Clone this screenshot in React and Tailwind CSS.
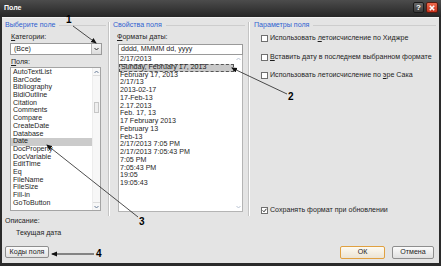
import React from "react";

const fields = [
  "AutoTextList",
  "BarCode",
  "Bibliography",
  "BidiOutline",
  "Citation",
  "Comments",
  "Compare",
  "CreateDate",
  "Database",
  "Date",
  "DocProperty",
  "DocVariable",
  "EditTime",
  "Eq",
  "FileName",
  "FileSize",
  "Fill-in",
  "GoToButton",
];

const formats = [
  "2/17/2013",
  "Sunday, February 17, 2013",
  "February 17, 2013",
  "2/17/13",
  "2013-02-17",
  "17-Feb-13",
  "2.17.2013",
  "Feb. 17, 13",
  "17 February 2013",
  "February 13",
  "Feb-13",
  "2/17/2013 7:05 PM",
  "2/17/2013 7:05:43 PM",
  "7:05 PM",
  "7:05:43 PM",
  "19:05",
  "19:05:43",
];

function GroupTitle({ children }) {
  return (
    <div className="flex items-center gap-[4px] h-[9px] leading-[9px] text-[#2f5fd0]">
      <span className="whitespace-nowrap">{children}</span>
      <div className="flex-1 h-px bg-[#cdcdcd]" />
    </div>
  );
}

function Chevron({ up, color = "#6b7f99" }) {
  return (
    <svg width="5" height="4" viewBox="0 0 5 4">
      <path
        d={up ? "M0.5 3 L2.5 1 L4.5 3" : "M0.5 1 L2.5 3 L4.5 1"}
        fill="none"
        stroke={color}
        strokeWidth="1"
      />
    </svg>
  );
}

function Check({ checked }) {
  return (
    <span className="w-[7px] h-[7px] border border-[#6f6f6f] bg-white flex items-center justify-center shrink-0">
      {checked && (
        <svg width="5" height="5" viewBox="0 0 5 5">
          <path d="M0.6 2.4 L2 3.8 L4.4 0.8" fill="none" stroke="#333" strokeWidth="1" />
        </svg>
      )}
    </span>
  );
}

function CheckRow({ checked, children }) {
  return (
    <div className="flex items-center gap-[2px] h-[9px] ml-[7px]">
      <Check checked={checked} />
      <span className="whitespace-nowrap">{children}</span>
    </div>
  );
}

function Separator() {
  return <div className="w-[2px] h-[194px] mt-[4px] border-l border-[#c4c4c4] border-r border-r-white shrink-0" />;
}

export default function App() {
  return (
    <div
      className="w-[441px] h-[266px] bg-[#2b2b2b] relative overflow-hidden text-[7.1px] text-[#1e1e1e]"
      style={{ fontFamily: '"Liberation Sans", Arial, sans-serif' }}
    >
      {/* title bar */}
      <div className="h-[17px] flex items-center justify-between pl-[4px] pr-[3px] bg-gradient-to-b from-[#4c4c4c] to-[#262626]">
        <span className="text-white font-bold text-[7px]">Поле</span>
        <div className="flex gap-[2px] mt-[-2px]">
          <div className="w-[11px] h-[11px] rounded-[2px] border border-[#1a1a1a] bg-gradient-to-b from-[#6a6a6a] to-[#3a3a3a] text-white font-bold text-[8px] leading-[10px] text-center">
            ?
          </div>
          <div className="w-[12px] h-[11px] rounded-[2px] border border-[#5a1b10] bg-gradient-to-b from-[#ef6a4c] to-[#c8301b] flex items-center justify-center">
            <svg width="6" height="6" viewBox="0 0 6 6">
              <path d="M0.8 0.8 L5.2 5.2 M5.2 0.8 L0.8 5.2" stroke="white" strokeWidth="1.6" />
            </svg>
          </div>
        </div>
      </div>

      {/* body */}
      <div className="mx-[2px] h-[246px] bg-[#e4e4e4] flex border-t border-[#f2f2f2]">
        {/* left column */}
        <div className="w-[106px] pl-[3px] pr-[2px] pt-[3px] flex flex-col shrink-0">
          <GroupTitle>Выберите поле</GroupTitle>
          <div className="mt-[3px] h-[9px] leading-[9px] ml-[6px]">
            <u>К</u>атегории:
          </div>
          <div className="mt-[1px] ml-[5px] w-[92px] h-[12px] border border-[#9a9a9a] bg-white flex items-center">
            <span className="flex-1 pl-[3px]">(Все)</span>
            <div className="w-[10px] h-full border-l border-[#b8b8b8] bg-gradient-to-b from-[#f4f4f4] to-[#dcdcdc] flex items-center justify-center">
              <Chevron color="#333" />
            </div>
          </div>
          <div className="mt-[3px] h-[9px] leading-[9px] ml-[6px]">
            <u>П</u>оля:
          </div>
          <div className="ml-[5px] w-[91px] h-[144px] border border-[#a4a4a4] bg-white flex">
            <div className="flex-1 pt-[1px] leading-[7.7px]">
              {fields.map((f) => (
                <div
                  key={f}
                  className={`pl-[2px] h-[7.7px] whitespace-nowrap ${f === "Date" ? "bg-[#cbcbcb]" : ""}`}
                >
                  {f}
                </div>
              ))}
            </div>
            <div className="w-[8px] flex flex-col items-center bg-[#f7f7f7] border-l border-[#ededed]">
              <div className="h-[8px] w-full flex items-center justify-center border-b border-[#dcdcdc]">
                <Chevron up />
              </div>
              <div className="flex-1 w-full pt-[26px] flex justify-center">
                <div className="w-[5px] h-[11px] border border-[#c6c6c6] bg-[#eeeeee]" />
              </div>
              <div className="h-[8px] w-full flex items-center justify-center border-t border-[#dcdcdc]">
                <Chevron />
              </div>
            </div>
          </div>
          <div className="mt-[6px] h-[9px] leading-[9px]">Описание:</div>
          <div className="mt-[3px] h-[9px] leading-[9px] ml-[11px]">Текущая дата</div>
          <div className="mt-[8px] w-[44px] h-[12px] border border-[#8e8e8e] rounded-[2px] bg-gradient-to-b from-[#fbfbfb] to-[#e2e2e2] flex items-center justify-center">
            Ко<u>д</u>ы поля
          </div>
        </div>

        <Separator />

        {/* middle column */}
        <div className="w-[138px] pl-[3px] pr-[3px] pt-[3px] flex flex-col shrink-0">
          <GroupTitle>Свойства поля</GroupTitle>
          <div className="mt-[3px] h-[9px] leading-[9px] ml-[4px]">
            <u>Ф</u>орматы даты:
          </div>
          <div className="mt-[2px] ml-[5px] w-[125px] h-[11px] border border-[#9a9a9a] bg-white flex items-center pl-[2px]">
            dddd, MMMM dd, yyyy
          </div>
          <div className="ml-[5px] w-[125px] h-[157px] border border-[#b4b4b4] border-t-0 bg-white flex">
            <div className="flex-1 pt-[1px] leading-[7.75px]">
              {formats.map((f, i) => (
                <div
                  key={f}
                  className={`pl-[1px] h-[7.75px] whitespace-nowrap ${
                    i === 1 ? "bg-[#c9c9c9] border border-dashed border-[#555] leading-[5.75px]" : ""
                  }`}
                >
                  {f}
                </div>
              ))}
            </div>
            <div className="w-[8px] flex flex-col items-center justify-between">
              <div className="h-[8px] flex items-center">
                <Chevron up color="#b9c3d3" />
              </div>
              <div className="h-[8px] flex items-center">
                <Chevron color="#b9c3d3" />
              </div>
            </div>
          </div>
        </div>

        <Separator />

        {/* right column */}
        <div className="flex-1 pl-[4px] pr-[3px] pt-[3px] flex flex-col">
          <GroupTitle>Параметры поля</GroupTitle>
          <div className="mt-[4px] flex flex-col gap-[9.5px]">
            <CheckRow>
              Использовать <u>л</u>етоисчисление по Хиджре
            </CheckRow>
            <CheckRow>
              <u>В</u>ставить дату в последнем выбранном формате
            </CheckRow>
            <CheckRow>
              Использовать летоисчисление по <u>э</u>ре Сака
            </CheckRow>
          </div>
          <div className="mt-auto">
            <CheckRow checked>Сохранять формат при обновлении</CheckRow>
          </div>
          <div className="mt-[31px] mb-[4px] flex justify-end gap-[7px] pr-[2px]">
            <div className="w-[45px] h-[13px] border border-[#e0a040] rounded-[2px] bg-gradient-to-b from-[#fdfaf2] to-[#ece4d4] flex items-center justify-center">
              ОК
            </div>
            <div className="w-[42px] h-[13px] border border-[#8e8e8e] rounded-[2px] bg-gradient-to-b from-[#fbfbfb] to-[#e0e0e0] flex items-center justify-center">
              Отмена
            </div>
          </div>
        </div>
      </div>

      {/* annotations */}
      <svg className="absolute left-0 top-0 pointer-events-none" width="441" height="266" viewBox="0 0 441 266">
        <defs>
          <marker id="ah" markerWidth="6" markerHeight="6" refX="5" refY="3" orient="auto" markerUnits="userSpaceOnUse">
            <path d="M0 0.5 L6 3 L0 5.5 Z" fill="#111" />
          </marker>
        </defs>
        <line x1="73" y1="26" x2="96" y2="43" stroke="#222" strokeWidth="0.8" markerEnd="url(#ah)" />
        <line x1="287" y1="94" x2="232" y2="68" stroke="#222" strokeWidth="0.8" markerEnd="url(#ah)" />
        <line x1="138" y1="217" x2="47" y2="145" stroke="#222" strokeWidth="0.8" markerEnd="url(#ah)" />
        <line x1="94" y1="254" x2="52" y2="254" stroke="#222" strokeWidth="1" markerEnd="url(#ah)" />
      </svg>
      <span className="absolute left-[66px] top-[15px] text-[10px] font-bold leading-none text-black">1</span>
      <span className="absolute left-[288px] top-[92px] text-[10px] font-bold leading-none text-black">2</span>
      <span className="absolute left-[139px] top-[217px] text-[10px] font-bold leading-none text-black">3</span>
      <span className="absolute left-[96px] top-[249px] text-[10px] font-bold leading-none text-black">4</span>
    </div>
  );
}
